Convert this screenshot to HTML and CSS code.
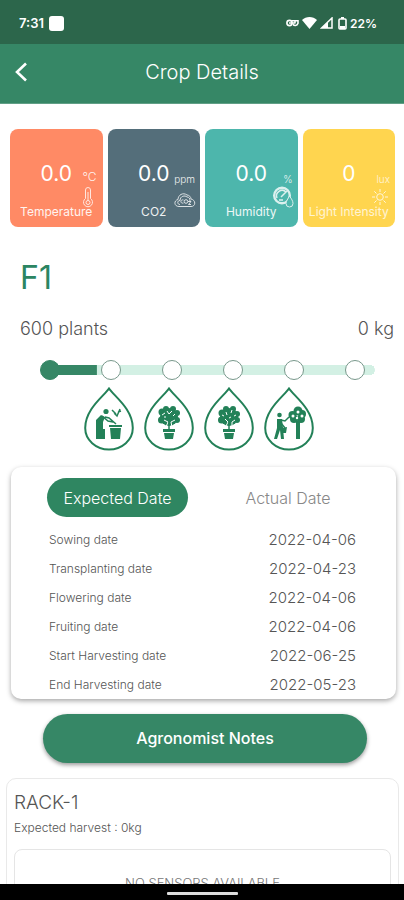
FILE: index.html
```html
<!DOCTYPE html>
<html lang="en">
<head>
<meta charset="utf-8">
<meta name="viewport" content="width=device-width, initial-scale=1">
<title>Crop Details</title>
<link rel="stylesheet" href="styles.css">
</head>
<body>
<div class="status">
  <div class="status-group"><span>7:31</span><span class="notice"></span></div>
  <div class="status-group status-right">
    <svg width="13" height="8" viewBox="0 0 13 8" fill="none" stroke="currentColor" stroke-width="1.600"><circle cx="3.500" cy="4" r="2.600"/><path d="M3 4h6M6 1.800h6v2.500c-1 3-4 2.500-5 1M9 2v2.500"/></svg>
    <svg width="15" height="12" viewBox="0 0 15 12" fill="currentColor"><path d="M0 3C4-1 11-1 15 3L7.500 12z"/></svg>
    <svg width="13" height="12" viewBox="0 0 13 12"><path d="M12 1V11H1.500z" fill="none" stroke="currentColor" stroke-width="1.500"/><path d="M8 5V11H1.500z" fill="currentColor"/></svg>
    <svg class="battery" width="9" height="13" viewBox="0 0 9 13"><path d="M3 0h3v2H3z" fill="currentColor"/><rect x="1" y="2" width="7" height="10" rx="1" fill="none" stroke="currentColor" stroke-width="1.600"/><path d="M2 9h5v3H2z" fill="currentColor"/></svg>
    <span>22%</span>
  </div>
</div>
<header class="header">
  <button class="back" type="button" aria-label="Back"><svg width="14" height="20" viewBox="0 0 14 20" fill="none" stroke="currentColor" stroke-width="2.600"><path d="M12 1.500L3 10l9 8.500"/></svg></button>
  <h1 class="title">Crop Details</h1>
</header>
<main class="main">
  <section class="metrics">
    <div class="metric coral">
      <span class="value">0.0</span><span class="label">Temperature</span><span class="unit">°C</span>
      <svg class="metric-icon slim" width="12" height="22" viewBox="0 0 12 22" fill="none" stroke="currentColor"><path d="M3.500 12.500V4a2.500 2.500 0 0 1 5 0v8.500a4.500 4.500 0 1 1-5 0z"/><path d="M6 6v9"/><circle cx="6" cy="16.500" r="2"/></svg>
    </div>
    <div class="metric slate">
      <span class="value">0.0</span><span class="label">CO2</span><span class="unit small">ppm</span>
      <svg class="metric-icon" width="22" height="16" viewBox="0 0 22 16" fill="none" stroke="currentColor"><path d="M5 14.500C0 14.500-.5 8.500 4 7.500 4 3 9 0 13 3c2 0 4 2 4 4 5 1 5 7.500 0 7.500zM6 12.500c-3 0-3-4 0-4C6 4 11 3 13 5c2 0 3 1.500 3 4"/><path d="M9.500 8C6 7 6 12 9.500 11M14 9.500h3l-2.500 3H17"/><circle cx="12" cy="9.500" r="1.800"/></svg>
    </div>
    <div class="metric teal">
      <span class="value">0.0</span><span class="label">Humidity</span><span class="unit small">%</span>
      <svg class="metric-icon" width="22" height="22" viewBox="0 0 22 22" fill="none" stroke="currentColor"><circle cx="10" cy="9.500" r="7.800" stroke-width="2.400"/><path d="M5 12a5.500 5.500 0 0 1 9-6M9 11l6-6M7 14h4" stroke-width="1.500"/><path class="drop-cut" d="M17.500 10c2 3 3.500 5 3.500 7.500a3.500 3.500 0 0 1-7 0c0-2.500 2-4.500 3.500-7.500z"/></svg>
    </div>
    <div class="metric yellow">
      <span class="value">0</span><span class="label">Light Intensity</span><span class="unit small">lux</span>
      <svg class="metric-icon" width="16" height="16" viewBox="0 0 16 16" fill="none" stroke="currentColor"><circle cx="8" cy="8" r="3.300"/><path d="M8 0v3M8 13v3M0 8h3M13 8h3M2.300 2.300l2.200 2.200M11.500 11.500l2.200 2.200M2.300 13.700l2.200-2.200M11.500 4.500l2.200-2.200"/></svg>
    </div>
  </section>

  <section class="crop">
    <h2 class="crop-name">F1</h2>
    <div class="crop-facts"><span>600 plants</span><span>0 kg</span></div>
    <div class="track">
      <span class="step done"></span><span class="step"></span><span class="step"></span><span class="step"></span><span class="step"></span><span class="step"></span>
    </div>
    <div class="stages">
      <svg class="stage" viewBox="0 0 50 64"><path class="drop" d="M25 1.500C20 9 1.200 22 1.200 41a23.800 21.500 0 0 0 47.600 0C48.800 22 30 9 25 1.500z"/><circle cx="22" cy="24.500" r="2.600"/><path d="M12 33l5-5 4 2-2 5v17h-7zM19 42h2v10h-2zM26 41h11l-1 11h-9zM25 38h13v2H25z"/><path class="line" d="M18 29l6 5 5 1M21 30l4 1 7 6M30 26l3 3 3-7M32 27l-4-4M34 25l3-1"/></svg>
      <svg class="stage" viewBox="0 0 50 64"><path class="drop" d="M25 1.500C20 9 1.200 22 1.200 41a23.800 21.500 0 0 0 47.600 0C48.800 22 30 9 25 1.500z"/><path d="M19 42h12v3H19zM20 46h10l-1 6h-8z"/><circle cx="25" cy="30" r="9"/><circle cx="18" cy="25" r="3.500"/><circle cx="22" cy="22" r="3"/><circle cx="29" cy="22" r="3"/><circle cx="33" cy="26" r="3"/><circle cx="33" cy="33" r="3"/><circle cx="17.500" cy="33" r="3.500"/><path class="cut" d="M22 40l2-5-4-2M28 40l-1-5 4-2M23 24l2 3 3-3M31 27l-2 2M18 28l3-2M20 30h2"/><path class="line" d="M25 43V33"/></svg>
      <svg class="stage" viewBox="0 0 50 64"><path class="drop" d="M25 1.500C20 9 1.200 22 1.200 41a23.800 21.500 0 0 0 47.600 0C48.800 22 30 9 25 1.500z"/><path d="M19 42h12v3H19zM20 46h10l-1 6h-8z"/><circle cx="25" cy="30" r="9"/><circle cx="18" cy="26" r="3.500"/><circle cx="22" cy="22" r="3"/><circle cx="29" cy="22" r="3"/><circle cx="33" cy="27" r="3"/><circle cx="33" cy="33" r="3"/><circle cx="17.500" cy="33" r="3.500"/><path class="cut" d="M22 39l2-4-3-3M28 39v-4l3-2M22 25l1 3M28 23l-1 3M30 29l2-1M18 28l2 1M25 31l2-1"/><path class="line" d="M25 43V34"/></svg>
      <svg class="stage" viewBox="0 0 50 64"><path class="drop" d="M25 1.500C20 9 1.200 22 1.200 41a23.800 21.500 0 0 0 47.600 0C48.800 22 30 9 25 1.500z"/><circle cx="15.500" cy="28" r="2.300"/><path d="M13 32h5l1 9 1 11h-3l-1-9-3 9h-3l3-11zM18 41l5-1-1 6h-4zM32 34h4v18h-4z"/><circle cx="34" cy="24" r="4.500"/><circle cx="28.500" cy="28" r="4"/><circle cx="38" cy="27" r="4"/><circle cx="37" cy="32" r="4"/><circle cx="30" cy="32" r="4"/><path class="line" d="M17 33l4 1 4-4M17 36l4 5"/><g class="holes"><circle cx="34" cy="25" r="1.500"/><circle cx="29" cy="29" r="1.500"/><circle cx="38" cy="29" r="1.500"/><circle cx="33" cy="31" r="1.200"/></g></svg>
    </div>
  </section>

  <section class="dates">
    <div class="tabs">
      <button class="tab active" type="button">Expected Date</button>
      <button class="tab" type="button">Actual Date</button>
    </div>
    <table class="date-table">
      <tbody>
        <tr><th scope="row">Sowing date</th><td>2022-04-06</td></tr>
        <tr><th scope="row">Transplanting date</th><td>2022-04-23</td></tr>
        <tr><th scope="row">Flowering date</th><td>2022-04-06</td></tr>
        <tr><th scope="row">Fruiting date</th><td>2022-04-06</td></tr>
        <tr><th scope="row">Start Harvesting date</th><td>2022-06-25</td></tr>
        <tr><th scope="row">End Harvesting date</th><td>2022-05-23</td></tr>
      </tbody>
    </table>
  </section>

  <button class="notes" type="button">Agronomist Notes</button>

  <section class="rack">
    <h2 class="rack-name">RACK-1</h2>
    <p class="rack-harvest">Expected harvest : 0kg</p>
    <div class="sensors">NO SENSORS AVAILABLE</div>
  </section>
</main>
<div class="gesture"><span class="gesture-bar"></span></div>
</body>
</html>
```
FILE: styles.css
```css
* { box-sizing: border-box; }
body {
  margin: 0;
  height: 100vh;
  display: flex;
  flex-direction: column;
  overflow: hidden;
  background: #fff;
  color: #555;
  font-family: Inter, "Open Sans", sans-serif;
  font-weight: 300;
}
button { border: 0; padding: 0; background: none; font: inherit; color: inherit; }
h1, h2, p { margin: 0; font-weight: inherit; }
svg { display: block; flex: none; }

.status {
  flex: none;
  height: 44px;
  padding: 2px 27px 0 19px;
  display: flex;
  align-items: center;
  justify-content: space-between;
  background: #2c664b;
  color: #fff;
  font-size: 13px;
  font-weight: 600;
}
.status-group { display: flex; align-items: center; gap: 5px; }
.status-right { gap: 3px; font-size: 12px; }
.battery { margin-left: 2px; }
.notice { width: 15px; height: 15px; border-radius: 3px; background: #fff; }

.header {
  flex: none;
  height: 60px;
  padding: 0 14px 4px;
  display: grid;
  grid-template-columns: 24px 1fr 24px;
  align-items: center;
  background: #368766;
  border-bottom: 1px solid #619f86;
  color: #fff;
}
.title { text-align: center; font-size: 20px; line-height: 24px; }

.main { flex: 1; min-height: 0; overflow: hidden; display: flex; flex-direction: column; }
.main > * { flex: none; }

.metrics {
  padding: 25px 9px 0 10px;
  display: grid;
  grid-template-columns: repeat(4, 1fr);
  gap: 5px;
}
.metric {
  position: relative;
  height: 98px;
  padding: 30px 0 6px;
  display: flex;
  flex-direction: column;
  align-items: center;
  justify-content: space-between;
  border-radius: 8px;
  color: #fff;
}
.coral { background: #ff8a65; }
.slate { background: #546e7a; }
.teal { background: #4db6ac; }
.yellow { background: #ffd54f; }
.value { font-size: 21px; line-height: 30px; font-weight: 400; }
.label { font-size: 12px; line-height: 18px; font-weight: 400; white-space: nowrap; opacity: .9; }
.unit { position: absolute; right: 6px; top: 40px; font-size: 12px; line-height: 16px; opacity: .9; }
.unit.small { top: 42px; right: 5px; font-size: 10px; }
.metric-icon { position: absolute; right: 4px; bottom: 19px; opacity: .8; }
.slim { right: 9px; }
.yellow .metric-icon { right: 7px; bottom: 22px; }
.yellow .label, .yellow .unit { opacity: .75; }
.drop-cut { fill: #4db6ac; }

.crop { padding: 32px 10px 0 20px; }
.crop-name { font-size: 32px; line-height: 38px; font-weight: 400; color: #2b8562; }
.crop-facts {
  margin-top: 20px;
  display: flex;
  justify-content: space-between;
  font-size: 18px;
  line-height: 24px;
}
.track {
  height: 20px;
  margin: 19px 19px 0 20px;
  padding-right: 10px;
  display: flex;
  align-items: center;
  justify-content: space-between;
  border-radius: 10px;
  background:
    linear-gradient(#368766, #368766) 10px 5px / 14% 10px no-repeat,
    linear-gradient(#d3f0e4, #d3f0e4) 10px 5px / calc(100% - 15px) 10px no-repeat,
    radial-gradient(circle at 5px 5px, #d3f0e4 5px, transparent 5px) 100% 5px / 10px 10px no-repeat;
}
.step { width: 20px; height: 20px; border: 1px solid #78988b; border-radius: 50%; background: #fff; }
.step.done { border-color: #368766; background: #368766; }
.stages { margin-top: 7px; padding-left: 64px; display: flex; gap: 10px; }
.stage { width: 50px; height: 64px; fill: #238158; }
.drop { fill: none; stroke: #238158; stroke-width: 2; }
.line { fill: none; stroke: #238158; stroke-width: 1.5; }
.cut { fill: none; stroke: #fff; stroke-width: 1; }
.holes { fill: #fff; }

.dates {
  margin: 16px 8px 0 11px;
  padding: 11px 36px 0;
  border-radius: 10px;
  background: #fff;
  box-shadow: 0 2px 5px rgba(0, 0, 0, .35);
}
.tabs { display: grid; grid-template-columns: 141px 1fr; gap: 28px; }
.tab { height: 39px; border-radius: 20px; font-size: 16px; line-height: 20px; color: #888; }
.tab.active { background: #2f8661; color: #fff; }
.date-table { width: 100%; margin-top: 8px; border-collapse: collapse; }
.date-table th, .date-table td { height: 29px; padding: 0 4px 0 2px; font-weight: 300; }
.date-table th { font-size: 12px; text-align: left; }
.date-table td { font-size: 15px; text-align: right; }

.notes {
  height: 49px;
  margin: 15px 37px 0 43px;
  padding-bottom: 2px;
  border-radius: 25px;
  background: #368766;
  color: #fff;
  font-size: 16px;
  font-weight: 500;
  box-shadow: 0 2px 4px rgba(0, 0, 0, .4);
}

.rack {
  margin: 15px 5px 0 6px;
  padding: 12px 7px 10px;
  border: 1px solid #e9e9e9;
  border-radius: 10px;
}
.rack-name { font-size: 19px; line-height: 24px; }
.rack-harvest { margin-top: 4px; font-size: 12px; line-height: 18px; }
.sensors {
  margin-top: 12px;
  padding: 23px 0;
  border: 1px solid #e5e5e5;
  border-radius: 8px;
  text-align: center;
  font-size: 13px;
  line-height: 20px;
  color: #777;
}

.gesture { flex: none; height: 16px; display: flex; align-items: center; justify-content: center; padding-top: 3px; background: #000; }
.gesture-bar { width: 71px; height: 3px; border-radius: 1px; background: #ddd; }
```
